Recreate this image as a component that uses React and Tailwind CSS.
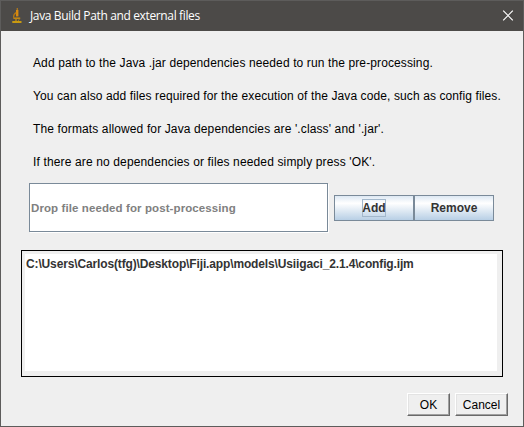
const lines = [
  { text: "Add path to the Java .jar dependencies needed to run the pre-processing.", cls: "tracking-[0.115px]" },
  { text: "You can also add files required for the execution of the Java code, such as config files.", cls: "tracking-[0.105px]" },
  { text: "The formats allowed for Java dependencies are '.class' and '.jar'.", cls: "tracking-[0.125px]" },
  { text: "If there are no dependencies or files needed simply press 'OK'.", cls: "tracking-[0.14px]" },
];

function Microscope() {
  return (
    <svg className="-mt-px ml-[11px] h-[15px] w-[10px] shrink-0" viewBox="0 0 10 15" fill="none">
      <path d="M4.6 0h1.4v2H4.6z" fill="#a87520" />
      <path d="M4 2h2.4v6.4H4z" fill="#d88a10" />
      <path d="M4.2 4.6C2.2 5.6 1.4 7 1.6 9.6" stroke="#b57613" strokeWidth="1.2" />
      <path d="M1.4 10.2h6.8" stroke="#c98a12" strokeWidth="1.5" />
      <path d="M4 10.6v2.6" stroke="#b88412" strokeWidth="1.5" />
      <path d="M7.6 10.6L6.2 13" stroke="#a87a12" />
      <path d="M0.3 13h9.2v2H0.3z" fill="#c99a10" />
    </svg>
  );
}

function MetalButton({ children, focused }) {
  return (
    <button className="flex h-[26px] w-20 items-center justify-center border border-[#7a8a99] bg-linear-to-b from-[#dde8f3] via-white via-30% to-[#b8cfe5] text-xs font-bold text-[#333333]">
      <span className={focused ? "flex h-[18px] w-6 items-center justify-center border border-[#a3b8cc] pt-px" : "pt-px"}>{children}</span>
    </button>
  );
}

function ClassicButton({ children, width }) {
  return (
    <button className={`${width} flex h-[23px] items-center justify-center border border-t-white border-l-white border-r-[#696969] border-b-[#696969] text-xs text-black shadow-[inset_-1px_-1px_#a0a0a0,inset_1px_1px_#e3e3e3]`}>
      {children}
    </button>
  );
}

export default function App() {
  return (
    <div className="flex h-[427px] w-[524px] flex-col overflow-hidden border border-[#5d5c5b] bg-[#efefef] font-['Liberation_Sans',Arial,sans-serif]">
      <header className="flex h-[30px] shrink-0 items-center bg-[#4c4a48] text-white">
        <Microscope />
        <h1 className="ml-[8px] whitespace-nowrap font-['Open_Sans','Noto_Sans',sans-serif] text-xs tracking-[-0.36px]">Java Build Path and external files</h1>
        <svg className="mr-[9px] ml-auto size-[12px]" viewBox="0 0 12 12" stroke="white" strokeWidth="1.2">
          <path d="M1.2 0.7l9.6 9.6M10.8 0.7l-9.6 9.6" />
        </svg>
      </header>
      <main className="flex flex-col">
        <div className="mt-4 ml-8 flex flex-col">
          {lines.map((l) => (
            <p key={l.text} className={`${l.cls} h-[33px] text-xs leading-[33px] whitespace-nowrap text-black`}>{l.text}</p>
          ))}
        </div>
        <div className="mt-1 ml-7 flex items-center">
          <div className="flex h-[49px] w-[299px] items-center border border-[#7a8a99] bg-white pt-[2px] pl-px text-[11.5px] font-bold tracking-[0.1px] whitespace-nowrap text-[#808080] shadow-[1px_1px_white]">
            Drop file needed for post-processing
          </div>
          <div className="ml-[6px] flex">
            <MetalButton focused>Add</MetalButton>
            <MetalButton>Remove</MetalButton>
          </div>
        </div>
        <div className="mt-[18px] ml-5 h-[127px] w-[482px] border border-black pt-[3px] pr-[5px] pb-[5px] pl-[3px]">
          <div className="h-full bg-white pt-[3px] pl-px text-xs leading-[14px] font-bold tracking-[-0.14px] whitespace-nowrap text-[#333333]">
            {"C:\\Users\\Carlos(tfg)\\Desktop\\Fiji.app\\models\\Usiigaci_2.1.4\\config.ijm"}
          </div>
        </div>
        <div className="mt-4 mr-[15px] flex justify-end gap-[5px]">
          <ClassicButton width="w-[43px]">OK</ClassicButton>
          <ClassicButton width="w-[53px]">Cancel</ClassicButton>
        </div>
      </main>
    </div>
  );
}
